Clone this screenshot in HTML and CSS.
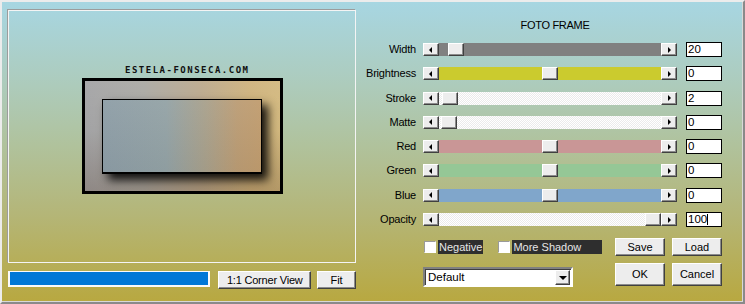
FILE: index.html
```html
<!DOCTYPE html>
<html>
<head>
<meta charset="utf-8">
<link rel="stylesheet" href="styles.css">
</head>
<body>
<div class="win">
  <div class="left">
    <div class="preview">
      <div class="logo">ESTELA-FONSECA.COM</div>
      <div class="photo"><div class="inner"></div></div>
    </div>
    <div class="leftbar">
      <div class="progress"><div class="fill"></div></div>
      <button class="btn corner">1:1 Corner View</button>
      <button class="btn fit">Fit</button>
    </div>
  </div>
  <div class="right">
    <div class="title">FOTO FRAME</div>
    <div class="sliders">
      <div class="lbl">Width</div>
      <div class="slider"><span class="arr l"></span><span class="track gray"><span class="thumb" style="left:9px"></span></span><span class="arr r"></span></div>
      <div class="num">20</div>

      <div class="lbl">Brightness</div>
      <div class="slider"><span class="arr l"></span><span class="track yellow"><span class="thumb" style="left:103px"></span></span><span class="arr r"></span></div>
      <div class="num">0</div>

      <div class="lbl">Stroke</div>
      <div class="slider"><span class="arr l"></span><span class="track white"><span class="thumb" style="left:3px"></span></span><span class="arr r"></span></div>
      <div class="num">2</div>

      <div class="lbl">Matte</div>
      <div class="slider"><span class="arr l"></span><span class="track white"><span class="thumb" style="left:2px"></span></span><span class="arr r"></span></div>
      <div class="num">0</div>

      <div class="lbl">Red</div>
      <div class="slider"><span class="arr l"></span><span class="track red"><span class="thumb" style="left:103px"></span></span><span class="arr r"></span></div>
      <div class="num">0</div>

      <div class="lbl">Green</div>
      <div class="slider"><span class="arr l"></span><span class="track green"><span class="thumb" style="left:103px"></span></span><span class="arr r"></span></div>
      <div class="num">0</div>

      <div class="lbl">Blue</div>
      <div class="slider"><span class="arr l"></span><span class="track blue"><span class="thumb" style="left:103px"></span></span><span class="arr r"></span></div>
      <div class="num">0</div>

      <div class="lbl">Opacity</div>
      <div class="slider"><span class="arr l"></span><span class="track white"><span class="thumb" style="left:206px"></span></span><span class="arr r"></span></div>
      <div class="num">100<span class="caret"></span></div>
    </div>
    <div class="bottom">
      <div class="checks">
        <span class="cb"></span><span class="cblbl neg">Negative</span>
        <span class="cb cb2"></span><span class="cblbl shadow">More Shadow</span>
      </div>
      <button class="btn">Save</button>
      <button class="btn">Load</button>
      <div class="select"><span class="seltext">Default</span><span class="selbtn"></span></div>
      <button class="btn">OK</button>
      <button class="btn">Cancel</button>
    </div>
  </div>
</div>
</body>
</html>
```

FILE: styles.css
```css
body {
  margin: 0;
  font-family: "Liberation Sans", Arial, sans-serif;
  font-size: 11px;
  color: #000;
}

.win {
  width: 745px;
  height: 304px;
  box-sizing: border-box;
  border: 2px solid;
  border-color: #ececec #8a8a8a #8a8a8a #ececec;
  box-shadow: inset -1px -1px 0 #d8d8d8;
  background: linear-gradient(to bottom, #a7d6e2 0%, #adcbbb 28%, #b0c29c 48%, #b4b679 70%, #b8a840 100%);
  display: flex;
}

/* left side */
.left {
  width: 354px;
  padding: 8px 0 0 6px;
  box-sizing: border-box;
  flex: none;
}

.preview {
  width: 348px;
  height: 253px;
  box-sizing: border-box;
  border: 1px solid #f4f4f4;
  box-shadow: -1px -1px 0 #9c9c9c;
  display: flex;
  flex-direction: column;
  align-items: flex-start;
}

.logo {
  margin: 55px 0 0 116px;
  font-family: "DejaVu Sans Mono", monospace;
  font-weight: bold;
  font-size: 9px;
  line-height: 9px;
  letter-spacing: 1.5px;
  color: #111;
  white-space: nowrap;
}

.photo {
  margin: 3px 0 0 73px;
  width: 201px;
  height: 116px;
  box-sizing: border-box;
  border: 3px solid #000;
  background:
    linear-gradient(to bottom, rgba(255,255,255,0.06) 0%, rgba(0,0,0,0) 45%, rgba(70,40,20,0.22) 100%),
    linear-gradient(to right, #a3a3a5 0%, #aaa9a3 30%, #bba98c 60%, #ceb27c 85%, #d2b87e 100%);
  display: flex;
  align-items: flex-start;
}

.inner {
  margin: 18px 0 0 17px;
  width: 160px;
  height: 75px;
  box-sizing: border-box;
  border: 1px solid #000;
  border-bottom-width: 2px;
  background:
    linear-gradient(to bottom, rgba(255,255,255,0.05), rgba(0,0,0,0.03)),
    linear-gradient(to right, #8d9da6 0%, #93a2a5 40%, #a8a08b 65%, #bb9c74 85%, #c09c6e 100%);
  box-shadow: 6px 6px 9px rgba(0,0,0,0.9);
}

.leftbar {
  margin-top: 8px;
  display: flex;
  align-items: flex-start;
}

.progress {
  width: 203px;
  height: 16px;
  box-sizing: border-box;
  border: 2px solid #fafafa;
  border-top-width: 1px;
  background: #0078d7;
}

.btn {
  margin: 0;
  padding: 0;
  font-family: "Liberation Sans", Arial, sans-serif;
  font-size: 11px;
  color: #000;
  background: #ededed;
  border: 1px solid;
  border-color: #ffffff #404040 #404040 #ffffff;
  box-shadow: inset -1px -1px 0 #8c8c8c;
  box-sizing: border-box;
  line-height: 1;
}

.corner {
  margin-left: 8px;
  width: 93px;
  height: 18px;
  letter-spacing: -0.2px;
}

.fit {
  margin-left: 6px;
  width: 39px;
  height: 18px;
}

/* right side */
.right {
  flex: 1;
  padding-top: 17px;
  box-sizing: border-box;
}

.title {
  margin-left: 67px;
  width: 264px;
  text-align: center;
  line-height: 13px;
  letter-spacing: -0.3px;
}

.sliders {
  margin-top: 10px;
  display: grid;
  grid-template-columns: 60px 254px 38px;
  grid-auto-rows: 15px;
  column-gap: 7px;
  row-gap: 9.3px;
  align-items: center;
}

.lbl {
  text-align: right;
  line-height: 15px;
  white-space: nowrap;
  letter-spacing: -0.2px;
}

.slider {
  height: 13px;
  display: flex;
}

.arr {
  width: 16px;
  height: 13px;
  box-sizing: border-box;
  background: #ededed;
  border: 1px solid;
  border-color: #ffffff #404040 #404040 #ffffff;
  box-shadow: inset -1px -1px 0 #8c8c8c;
  display: flex;
  align-items: center;
  justify-content: center;
  flex: none;
}

.arr::before {
  content: "";
  width: 0;
  height: 0;
  border-top: 3px solid transparent;
  border-bottom: 3px solid transparent;
}

.arr.l::before {
  border-right: 3px solid #000;
  margin-left: -1px;
}

.arr.r::before {
  border-left: 3px solid #000;
  margin-left: 0;
}

.track {
  position: relative;
  flex: 1;
  height: 13px;
}

.gray { background: #808080; }
.yellow { background: #cbcb2e; }
.red { background: #c99696; }
.green { background: #95c796; }
.blue { background: #80a6cb; }
.white {
  background: repeating-conic-gradient(#ffffff 0 25%, #ebebeb 0 50%) 0 0 / 2px 2px;
}

.thumb {
  position: absolute;
  top: 0;
  width: 16px;
  height: 13px;
  box-sizing: border-box;
  background: #ededed;
  border: 1px solid;
  border-color: #ffffff #404040 #404040 #ffffff;
  box-shadow: inset -1px -1px 0 #8c8c8c;
}

.num {
  margin-left: 2px;
  width: 36px;
  height: 15px;
  box-sizing: border-box;
  border: 1px solid #000;
  background: #fff;
  padding-left: 1px;
  line-height: 13px;
  font-size: 11.5px;
  display: flex;
  align-items: center;
}

.caret {
  display: inline-block;
  width: 1px;
  height: 11px;
  background: #000;
}

.bottom {
  margin: 11px 0 0 67px;
  display: grid;
  grid-template-columns: 185px 50px 50px;
  grid-template-rows: 18px 23px;
  column-gap: 7px;
  row-gap: 7px;
}

.checks {
  display: flex;
  align-items: center;
}

.cb {
  margin-left: 1px;
  width: 12px;
  height: 12px;
  box-sizing: border-box;
  background: #fff;
  border: 1px solid;
  border-color: #9a9a9a #ffffff #ffffff #9a9a9a;
  flex: none;
}

.cb2 {
  margin-left: 15px;
}

.cblbl {
  margin-left: 2px;
  height: 14px;
  line-height: 14px;
  background: #2e2e2e;
  color: #e6e6e6;
  padding: 0 1px;
  box-sizing: border-box;
  white-space: nowrap;
}

.shadow {
  width: 90px;
}

.select {
  margin-top: 4px;
  width: 150px;
  height: 20px;
  box-sizing: border-box;
  border: 2px solid;
  border-color: #808080 #ffffff #ffffff #808080;
  box-shadow: inset 1px 1px 0 #404040;
  background: #fff;
  display: flex;
  align-items: center;
  justify-content: space-between;
}

.seltext {
  padding-left: 3px;
  font-size: 11.5px;
}

.selbtn {
  margin-right: 1px;
  width: 15px;
  height: 15px;
  box-sizing: border-box;
  background: #ededed;
  border: 1px solid;
  border-color: #ffffff #404040 #404040 #ffffff;
  box-shadow: inset -1px -1px 0 #8c8c8c;
  display: flex;
  align-items: center;
  justify-content: center;
}

.selbtn::before {
  content: "";
  width: 0;
  height: 0;
  border-left: 4px solid transparent;
  border-right: 4px solid transparent;
  border-top: 4px solid #000;
  margin-top: 1px;
}
```
